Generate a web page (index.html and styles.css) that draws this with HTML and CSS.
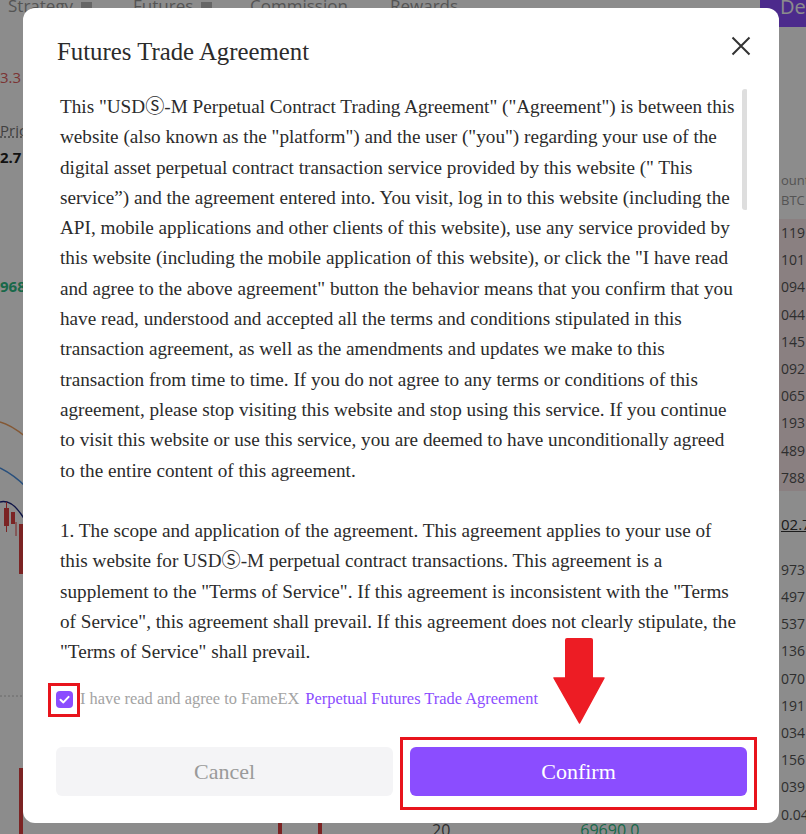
FILE: index.html
```html
<!DOCTYPE html>
<html lang="en">
<head>
<meta charset="utf-8">
<title>Futures Trade Agreement</title>
<link rel="stylesheet" href="styles.css">
</head>
<body>
<div class="page">
  <header class="topnav">
    <span class="nav-item nav-w1">Strategy<i class="caret"></i></span>
    <span class="nav-item nav-w2">Futures<i class="caret"></i></span>
    <span class="nav-item nav-w3">Commission</span>
    <span class="nav-item">Rewards</span>
    <span class="nav-btn">Deposit</span>
  </header>
  <div class="main">
    <aside class="left">
      <div class="l-red">3.3</div>
      <div class="l-label">Price</div>
      <div class="l-bold">2.7</div>
      <div class="l-green">968</div>
      <svg class="chart" width="60" height="538" viewBox="0 0 60 538">
        <path d="M0 126 C8 128 16 133 26 141" fill="none" stroke="#f0a060" stroke-width="1.5"/>
        <path d="M0 172 C8 176 16 181 26 191" fill="none" stroke="#4a90e2" stroke-width="1.5"/>
        <path d="M0 206 C8 204 16 208 26 226" fill="none" stroke="#1a237e" stroke-width="1.5"/>
        <rect x="4" y="212" width="5" height="18" fill="#e04040"/>
        <line x1="6.5" y1="206" x2="6.5" y2="236" stroke="#e04040"/>
        <rect x="11" y="216" width="4" height="12" fill="#e04040"/>
        <line x1="16" y1="226" x2="16" y2="240" stroke="#e04040"/>
        <rect x="19" y="228" width="5" height="50" fill="#e04040"/>
        <line x1="0" y1="400" x2="60" y2="400" stroke="#c0c0c0" stroke-dasharray="2 2"/>
        <rect x="19" y="472" width="4" height="66" fill="#e04040"/>
      </svg>
    </aside>
    <div class="center">
      <div class="foot">
        <span class="f-bar"></span>
        <span class="f-bar"></span>
        <span class="f-num">20</span>
        <span class="f-green">69690.0</span>
      </div>
    </div>
    <aside class="right">
      <div class="r-head">ount<br>BTC</div>
      <div class="r-asks">
        <div class="r-row">119</div>
        <div class="r-row">101</div>
        <div class="r-row">094</div>
        <div class="r-row">044</div>
        <div class="r-row">145</div>
        <div class="r-row">092</div>
        <div class="r-row">065</div>
        <div class="r-row">193</div>
        <div class="r-row">489</div>
        <div class="r-row">788</div>
      </div>
      <div class="r-mid">02.7</div>
      <div class="r-bids">
        <div class="r-row">973</div>
        <div class="r-row">497</div>
        <div class="r-row">537</div>
        <div class="r-row">136</div>
        <div class="r-row">070</div>
        <div class="r-row">191</div>
        <div class="r-row">034</div>
        <div class="r-row">156</div>
        <div class="r-row">039</div>
        <div class="r-row r-last">0.043</div>
      </div>
    </aside>
  </div>
</div>

<div class="overlay"></div>

<div class="modal" role="dialog" aria-label="Futures Trade Agreement">
  <div class="modal-head">
    <h2 class="modal-title">Futures Trade Agreement</h2>
    <button class="close" aria-label="Close">
      <svg width="20" height="20" viewBox="0 0 20 20"><path d="M1.5 1.5 L18.5 18.5 M18.5 1.5 L1.5 18.5" stroke="#333" stroke-width="2" fill="none"/></svg>
    </button>
  </div>

  <div class="content">
    <div class="text">
      <p>This "USDⓈ-M Perpetual Contract Trading Agreement" ("Agreement") is between this<br>
      website (also known as the "platform") and the user ("you") regarding your use of the<br>
      digital asset perpetual contract transaction service provided by this website (" This<br>
      service”) and the agreement entered into. You visit, log in to this website (including the<br>
      API, mobile applications and other clients of this website), use any service provided by<br>
      this website (including the mobile application of this website), or click the "I have read<br>
      and agree to the above agreement" button the behavior means that you confirm that you<br>
      have read, understood and accepted all the terms and conditions stipulated in this<br>
      transaction agreement, as well as the amendments and updates we make to this<br>
      transaction from time to time. If you do not agree to any terms or conditions of this<br>
      agreement, please stop visiting this website and stop using this service. If you continue<br>
      to visit this website or use this service, you are deemed to have unconditionally agreed<br>
      to the entire content of this agreement.</p>
      <p>1. The scope and application of the agreement. This agreement applies to your use of<br>
      this website for USDⓈ-M perpetual contract transactions. This agreement is a<br>
      supplement to the "Terms of Service". If this agreement is inconsistent with the "Terms<br>
      of Service", this agreement shall prevail. If this agreement does not clearly stipulate, the<br>
      "Terms of Service" shall prevail.</p>
      <p>2. Risk warning. Perpetual contract trading carries high risk.</p>
    </div>
    <div class="scrollbar"><div class="thumb"></div></div>
  </div>

  <label class="agree">
    <span class="check">
      <svg width="17" height="17" viewBox="0 0 17 17"><rect x="0" y="0" width="17" height="17" rx="4" fill="#8b4dff"/><path d="M4.5 8.7 L7.4 11.4 L12.6 5.9" stroke="#fff" stroke-width="2" fill="none" stroke-linecap="round" stroke-linejoin="round"/></svg>
    </span>
    <span class="agree-text">I have read and agree to FameEX</span>
    <span class="agree-link">Perpetual Futures Trade Agreement</span>
  </label>

  <div class="actions">
    <button class="btn btn-cancel">Cancel</button>
    <button class="btn btn-confirm">Confirm</button>
  </div>

  <svg class="arrow" width="52" height="86" viewBox="0 0 52 86">
    <rect x="12" y="0" width="28" height="44" rx="2" fill="#ed1c24"/>
    <path d="M1 40 L51 40 L26.5 85 Z" fill="#ed1c24" stroke="#ed1c24" stroke-linejoin="round" stroke-width="1.5"/>
  </svg>
</div>
</body>
</html>
```

FILE: styles.css
```css
* { box-sizing: border-box; }

html, body {
  margin: 0;
  width: 806px;
  height: 834px;
  overflow: hidden;
}

body {
  position: relative;
  background: #fff;
  font-family: "Open Sans", "Liberation Sans", sans-serif;
}

/* ---------- background trading page ---------- */
.page {
  height: 834px;
  display: flex;
  flex-direction: column;
}

.topnav {
  height: 16px;
  display: flex;
  align-items: flex-end;
  padding-left: 8px;
  font-size: 17px;
  line-height: 20px;
  color: #999;
}

.nav-item { white-space: nowrap; }
.nav-w1 { width: 125px; }
.nav-w2 { width: 117px; }
.nav-w3 { width: 140px; }

.caret {
  display: inline-block;
  width: 11px;
  height: 6px;
  margin-left: 8px;
  vertical-align: 4px;
  background: #bbb;
}

.nav-btn {
  margin-left: auto;
  align-self: flex-start;
  position: relative;
  z-index: 0;
  width: 46px;
  height: 27px;
  padding-left: 20px;
  background: #8a4dff;
  color: #fff;
  font-size: 20px;
  line-height: 14px;
  overflow: hidden;
  white-space: nowrap;
}

.main {
  flex: 1;
  display: flex;
  min-height: 0;
}

.left {
  width: 60px;
  padding-top: 51px;
  display: flex;
  flex-direction: column;
  font-size: 15px;
  line-height: 20px;
  white-space: nowrap;
}

.l-red { color: #e06060; }
.l-label { margin-top: 33px; color: #777; text-decoration: underline; text-decoration-style: dotted; }
.l-bold { margin-top: 7px; color: #222; font-weight: 700; }
.l-green { margin-top: 109px; color: #2ebd85; font-weight: 700; }
.chart { display: block; }

.center {
  flex: 1;
  display: flex;
  flex-direction: column;
  justify-content: flex-end;
}

.foot {
  height: 14px;
  display: flex;
  align-items: flex-start;
  font-size: 16px;
  line-height: 20px;
  color: #555;
}

.f-bar {
  width: 4px;
  height: 30px;
  background: #e04040;
  margin-left: 218px;
  margin-top: -16px;
}
.f-bar + .f-bar { margin-left: 36px; }
.f-num { margin-left: 110px; }
.f-green { margin-left: 130px; color: #2ebd85; }

.right {
  width: 29px;
  overflow: hidden;
  padding-left: 4px;
  font-size: 14px;
  color: #555;
  white-space: nowrap;
}

.r-head {
  margin-top: 154px;
  font-size: 13px;
  line-height: 20px;
  color: #999;
}

.r-asks {
  margin-top: 9px;
  margin-left: -4px;
  padding-left: 4px;
  background: #fbeaec;
}

.r-row {
  height: 27.2px;
  line-height: 27.2px;
}

.r-mid {
  margin-top: 19px;
  height: 28px;
  line-height: 28px;
  color: #333;
  text-decoration: underline;
  font-size: 15px;
}

.r-bids { margin-top: 18px; }
.r-last { color: #555; }

/* ---------- dim overlay ---------- */
.overlay {
  position: absolute;
  inset: 0;
  background: rgba(0, 0, 0, 0.45);
}

/* ---------- modal ---------- */
.modal {
  position: absolute;
  left: 23px;
  top: 8px;
  width: 756px;
  height: 815px;
  padding: 0 32px 27px 33px;
  background: #fff;
  border-radius: 12px;
  display: flex;
  flex-direction: column;
  font-family: "Liberation Serif", "DejaVu Serif", "Noto Sans CJK SC", serif;
}

.modal-head {
  height: 80px;
  display: flex;
  justify-content: space-between;
  align-items: flex-start;
}

.modal-title {
  margin: 28px 0 0 1px;
  font-size: 24.8px;
  line-height: 32px;
  font-weight: 400;
  color: #2b2b2b;
}

.close {
  margin: 28px -4px 0 0;
  padding: 0;
  width: 20px;
  height: 20px;
  border: 0;
  background: none;
}
.close svg { display: block; }

.content {
  flex: 1;
  min-height: 0;
  display: flex;
  overflow: hidden;
}

.text {
  flex: 1;
  min-width: 0;
  padding: 4px 0 0 4px;
  font-size: 19.2px;
  line-height: 30.3px;
  color: #2b2b2b;
  white-space: nowrap;
}

.text p { margin: 0 0 30.3px; }

.scrollbar {
  width: 6px;
  margin-right: -1px;
}

.thumb {
  margin-top: 1px;
  height: 121px;
  border-radius: 3px;
  background: #dedede;
}

.agree {
  margin-top: 19px;
  height: 20px;
  display: flex;
  align-items: center;
  font-size: 16.4px;
  white-space: nowrap;
}

.check {
  position: relative;
  width: 17px;
  height: 17px;
  margin-right: 7px;
}
.check svg { display: block; }
.check::after {
  content: "";
  position: absolute;
  top: -8px;
  left: -8px;
  right: -7px;
  bottom: -9px;
  border: 3px solid #e8141c;
}

.agree-text { color: #a3a3a3; }
.agree-link { margin-left: 6px; color: #8b4dff; }

.actions {
  margin-top: 38px;
  display: flex;
  gap: 17px;
}

.btn {
  flex: 1;
  height: 49px;
  border: 0;
  border-radius: 6px;
  font-family: inherit;
  font-size: 22px;
}

.btn-cancel {
  background: #f4f4f6;
  color: #9a9a9a;
}

.btn-confirm {
  position: relative;
  background: #8b4dff;
  color: #fff;
}
.btn-confirm::after {
  content: "";
  position: absolute;
  top: -10px;
  left: -10px;
  right: -10px;
  bottom: -14px;
  border: 3px solid #e8141c;
}

.arrow {
  position: absolute;
  left: 530px;
  top: 630px;
}
```
